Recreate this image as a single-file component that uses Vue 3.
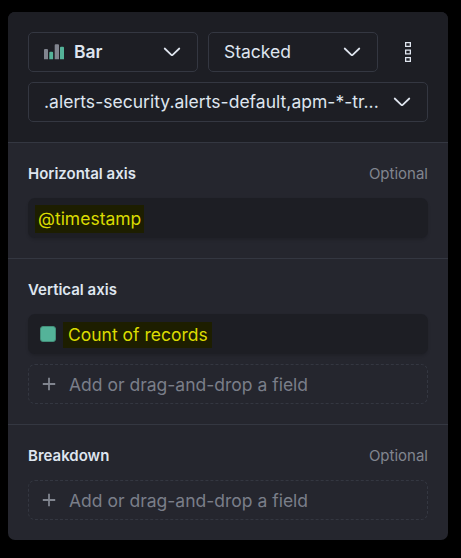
<script setup>
const sections = [
  { title: 'Horizontal axis', optional: true, fields: [{ label: '@timestamp' }], canAdd: false },
  { title: 'Vertical axis', optional: false, fields: [{ label: 'Count of records', swatch: true }], canAdd: true },
  { title: 'Breakdown', optional: true, fields: [], canAdd: true },
]
</script>

<template>
  <main class="page">
    <div class="panel">
      <header class="toolbar">
        <div class="row">
          <button class="select half">
            <svg class="chart" width="20" height="16" viewBox="0 0 20 16">
              <path class="grey" d="M0 6a1 1 0 0 1 1-1h2a1 1 0 0 1 1 1v9.300H0zM10.700 1.300a1 1 0 0 1 1-1h2.300a1 1 0 0 1 1 1v14H10.700z" />
              <path class="green" d="M5.300 8.700a1 1 0 0 1 1-1h1.800a1 1 0 0 1 1 1v6.600H5.300zM16 3.800a1 1 0 0 1 1-1h2a1 1 0 0 1 1 1v11.500H16z" />
            </svg>
            <span class="text bold">Bar</span>
            <svg class="chevron" width="18" height="10" viewBox="0 0 18 10"><path d="M1.700 1.500 8.300 7.800Q9 8.400 9.700 7.800L16.300 1.500" /></svg>
          </button>
          <button class="select half">
            <span class="text">Stacked</span>
            <svg class="chevron" width="18" height="10" viewBox="0 0 18 10"><path d="M1.700 1.500 8.300 7.800Q9 8.400 9.700 7.800L16.300 1.500" /></svg>
          </button>
          <button class="more" aria-label="More options">
            <svg width="6" height="20" viewBox="0 0 6 20">
              <path d="M.65.650h4.700v3.700H.65zM.65 8.150h4.700v3.700H.65zM.65 15.650h4.700v3.700H.65z" />
            </svg>
          </button>
        </div>
        <button class="select">
          <span class="text source">.alerts-security.alerts-default,apm-*-tr...</span>
          <svg class="chevron" width="18" height="10" viewBox="0 0 18 10"><path d="M1.700 1.500 8.300 7.800Q9 8.400 9.700 7.800L16.300 1.500" /></svg>
        </button>
      </header>
      <section v-for="s in sections" :key="s.title" class="section">
        <div class="heading">
          <h2>{{ s.title }}</h2>
          <span v-if="s.optional" class="optional">Optional</span>
        </div>
        <div class="slots">
          <div v-for="f in s.fields" :key="f.label" class="field" :class="{ colored: f.swatch }">
            <span v-if="f.swatch" class="swatch"></span>
            <mark>{{ f.label }}</mark>
          </div>
          <button v-if="s.canAdd" class="add">
            <svg width="14" height="14" viewBox="0 0 14 14"><path d="M7 .7v12.600M.8 7h12.400" /></svg>
            <span>Add or drag-and-drop a field</span>
          </button>
        </div>
      </section>
    </div>
  </main>
</template>

<style>
body {
  margin: 0;
  background: #000;
}
</style>

<style scoped>
* {
  box-sizing: border-box;
}
.page {
  height: 558px;
  padding: 12px 13px 18px 8px;
  background: #000;
  color: #dfe5ef;
  font-family: Inter, sans-serif;
  font-size: 17.5px;
}
.panel {
  height: 528px;
  border-radius: 7px;
  overflow: hidden;
  background: #25262e;
}
button {
  margin: 0;
  padding: 0;
  border: 0;
  background: none;
  color: inherit;
  font: inherit;
  text-align: left;
}
.toolbar {
  display: flex;
  flex-direction: column;
  gap: 10px;
  height: 130px;
  padding: 20px;
  background: #1d1e24;
}
.row {
  display: flex;
  gap: 10px;
}
.select {
  display: flex;
  align-items: center;
  height: 40px;
  padding: 0 16px 0 15px;
  border: 1px solid #343741;
  border-radius: 5px;
}
.half {
  width: 170px;
}
.text {
  flex: 1;
  line-height: 24px;
  white-space: nowrap;
}
.source {
  letter-spacing: 0.025px;
}
.bold {
  font-weight: 600;
}
.chart {
  margin-right: 10px;
}
.grey {
  fill: #81858f;
}
.green {
  fill: #54b399;
}
.chevron {
  flex: none;
}
.chevron path {
  fill: none;
  stroke: #dfe5ef;
  stroke-width: 1.75;
  stroke-linecap: round;
}
.more {
  display: flex;
  align-items: center;
  justify-content: center;
  width: 40px;
  height: 40px;
}
.more path {
  fill: none;
  stroke: #dfe5ef;
  stroke-width: 1.3;
}
.section {
  padding: 20px;
  border-top: 1px solid #343741;
}
.heading {
  display: flex;
  align-items: center;
  justify-content: space-between;
  height: 22px;
  margin-bottom: 13px;
  font-size: 15px;
  line-height: 22px;
}
h2 {
  margin: 0;
  font-size: 15px;
  font-weight: 600;
}
.optional {
  color: #81858f;
}
.slots {
  display: flex;
  flex-direction: column;
  gap: 10px;
}
.field {
  display: flex;
  align-items: center;
  height: 40px;
  padding-left: 7px;
  border-radius: 7px;
  background: #1d1e24;
  box-shadow: 0 2px 3px rgba(0, 0, 0, 0.14);
}
.field.colored {
  padding-left: 12px;
}
.swatch {
  width: 16px;
  height: 16px;
  margin-right: 7px;
  border: 1px solid #438f7a;
  border-radius: 3px;
  background: #54b399;
}
mark {
  height: 28px;
  margin-top: 2px;
  padding: 0 3px;
  background: #1d1e00;
  color: #dbdc00;
  line-height: 27px;
}
.colored mark {
  height: 26px;
  padding: 0 4px 0 5px;
  line-height: 26px;
}
.add {
  display: flex;
  align-items: center;
  height: 40px;
  padding-left: 13px;
  border: 1px dashed #343741;
  border-radius: 7px;
  color: #7a7e89;
}
.add svg {
  margin-right: 13px;
}
.add path {
  fill: none;
  stroke: #81858f;
  stroke-width: 1.8;
}
</style>
